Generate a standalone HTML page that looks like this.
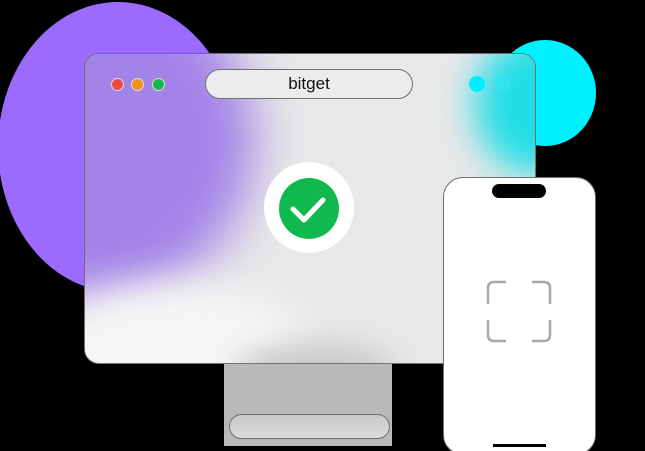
<!DOCTYPE html>
<html><head><style>
html,body{margin:0;padding:0;background:#000;width:645px;height:451px;overflow:hidden;position:relative;font-family:"Liberation Sans",sans-serif}
div{position:absolute;box-sizing:border-box}
</style></head><body>
<div style="left:-2px;top:2px;width:240px;height:290px;border-radius:50%;background:#9b6bff"></div>
<div style="left:494px;top:40px;width:102px;height:106px;border-radius:50%;background:#00f0ff"></div>
<div style="left:224px;top:360px;width:168px;height:86px;background:#b9b9b9"></div>
<div style="left:229px;top:414px;width:161px;height:25px;border-radius:13px;border:1.5px solid #707070;background:linear-gradient(#c8c8c8,#dcdcdc)"></div>
<div style="left:84px;top:53px;width:452px;height:311px;border-radius:15px;border:1.5px solid #707070;overflow:hidden;background:#e8e8e8">
 <div style="left:-160px;top:-80px;width:330px;height:330px;border-radius:50%;background:#a283e8;filter:blur(25px)"></div>
 <div style="left:390px;top:-20px;width:120px;height:140px;border-radius:50%;background:#20dde6;filter:blur(18px)"></div>
 <div style="left:-40px;top:230px;width:260px;height:120px;border-radius:50%;background:#f6f6f6;filter:blur(20px)"></div>
 <div style="left:150px;top:290px;width:160px;height:50px;border-radius:50%;background:#c9c9c9;filter:blur(14px)"></div>
</div>
<div style="left:205px;top:69px;width:208px;height:30px;border-radius:15px;border:1.5px solid #707070;background:#ececec;text-align:center;line-height:27px;font-size:17px;color:#111">bitget</div>
<div style="left:111px;top:78px;width:13px;height:13px;border-radius:50%;background:#f04848;border:1px solid #ddd"></div>
<div style="left:131px;top:78px;width:13px;height:13px;border-radius:50%;background:#f5901e;border:1px solid #ddd"></div>
<div style="left:152px;top:78px;width:13px;height:13px;border-radius:50%;background:#16b84e;border:1px solid #ddd"></div>
<div style="left:469px;top:76px;width:16px;height:16px;border-radius:50%;background:#00eeff"></div>
<div style="left:495px;top:76px;width:16px;height:16px;border-radius:50%;background:#30e4ec;opacity:.8"></div>
<div style="left:264px;top:162px;width:90px;height:91px;border-radius:50%;background:#fff"></div>
<div style="left:279px;top:178px;width:60px;height:61px;border-radius:50%;background:#10b94e"></div>
<svg style="position:absolute;left:279px;top:178px" width="60" height="61"><path d="M14 31 L25 42 L44 22" fill="none" stroke="#fff" stroke-width="5" stroke-linecap="round" stroke-linejoin="round"/></svg>
<div style="left:443px;top:177px;width:153px;height:278px;border-radius:20px;border:1.5px solid #707070;background:#fff"></div>
<div style="left:492px;top:184px;width:54px;height:14px;border-radius:7px;background:#000"></div>
<div style="left:493px;top:444px;width:53px;height:3px;background:#000"></div>
<svg style="position:absolute;left:486px;top:280px" width="68" height="64"><g fill="none" stroke="#a8a8a8" stroke-width="2.5"><path d="M2 24 V8 Q2 2 8 2 H20"/><path d="M46 2 H58 Q64 2 64 8 V24"/><path d="M2 40 V55 Q2 61 8 61 H20"/><path d="M46 61 H58 Q64 61 64 55 V40"/></g></svg>
</body></html>
